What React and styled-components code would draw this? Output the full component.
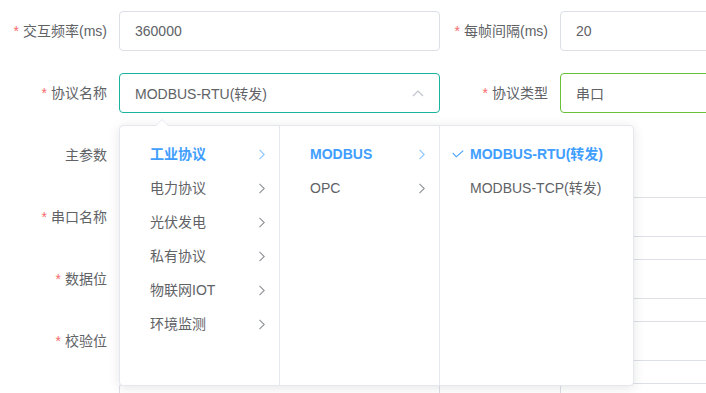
import React from "react";
import styled, { createGlobalStyle } from "styled-components";

const Global = createGlobalStyle`
  html, body { margin: 0; padding: 0; background: #fff; overflow: hidden; }
  body { font-family: "Liberation Sans", "Noto Sans CJK SC", sans-serif; font-size: 14px; color: #606266; }
  * { box-sizing: border-box; }
`;

const Form = styled.div`
  display: grid;
  grid-template-columns: 440px 440px;
  row-gap: 22px;
  padding-top: 11px;
  width: 880px;
`;

const Item = styled.div`
  display: flex;
  align-items: center;
  height: 40px;
`;

const Label = styled.label`
  flex: 0 0 ${(p) => p.$w || 120}px;
  padding-right: 12px;
  text-align: right;
  line-height: 40px;
  font-size: 14px;
  color: #606266;
  white-space: nowrap;
`;

const Star = styled.span`
  color: #f56c6c;
  margin-right: 4px;
`;

const Field = styled.div`
  position: relative;
  flex: 1;
  height: 40px;
  border: 1px solid ${(p) => p.$border || "#dcdfe6"};
  border-radius: 4px;
  background: #fff;
  padding: 0 15px;
  display: flex;
  align-items: center;
  justify-content: space-between;
  font-size: 14px;
  color: #606266;
`;

const Popper = styled.div`
  position: absolute;
  top: 51px;
  left: -1px;
  z-index: 10;
  display: flex;
  height: 261px;
  background: #fff;
  border: 1px solid #e4e7ed;
  border-radius: 4px;
  box-shadow: 0 2px 12px 0 rgba(0, 0, 0, 0.1);
`;

const Arrow = styled.div`
  position: absolute;
  top: -7px;
  left: 35px;
  width: 0;
  height: 0;
  border-left: 7px solid transparent;
  border-right: 7px solid transparent;
  border-bottom: 7px solid #e4e7ed;
  &::after {
    content: "";
    position: absolute;
    top: 1px;
    left: -6px;
    border-left: 6px solid transparent;
    border-right: 6px solid transparent;
    border-bottom: 6px solid #fff;
  }
`;

const Menu = styled.ul`
  list-style: none;
  margin: 0;
  padding: 11px 0;
  width: ${(p) => p.$w}px;
  border-right: ${(p) => (p.$last ? "none" : "1px solid #e4e7ed")};
`;

const Node = styled.li`
  position: relative;
  height: 34px;
  line-height: 34px;
  padding: 0 30px;
  display: flex;
  align-items: center;
  justify-content: space-between;
  font-size: 14px;
  white-space: nowrap;
  color: ${(p) => (p.$active ? "#409eff" : "#606266")};
  font-weight: ${(p) => (p.$active ? 700 : 400)};
`;

const Check = styled.svg`
  position: absolute;
  left: 12px;
  top: 13px;
`;

const Chevron = styled.svg`
  position: absolute;
  right: 13px;
  top: 12px;
`;

const ChevronRight = ({ active }) => (
  <Chevron width="8" height="11" viewBox="0 0 8 11">
    <polyline points="1.5,0.8 6.2,5.5 1.5,10.2" fill="none" stroke={active ? "#8cc5ff" : "#909399"} strokeWidth="1.1" />
  </Chevron>
);

const menus = [
  { w: 160, items: [["工业协议", true], ["电力协议"], ["光伏发电"], ["私有协议"], ["物联网IOT"], ["环境监测"]], arrow: true },
  { w: 160, items: [["MODBUS", true], ["OPC"]], arrow: true },
  { w: 193, items: [["MODBUS-RTU(转发)", true], ["MODBUS-TCP(转发)"]], arrow: false, last: true },
];

const Cascader = () => (
  <Popper>
    <Arrow />
    {menus.map((m, i) => (
      <Menu key={i} $w={m.w} $last={m.last}>
        {m.items.map(([t, a]) => (
          <Node key={t} $active={a}>
            {m.last && a && (
              <Check width="12" height="8" viewBox="0 0 12 8">
                <polyline points="0.8,3.2 4.3,6.8 11.2,0.6" fill="none" stroke="#409eff" strokeWidth="1.1" />
              </Check>
            )}
            <span>{t}</span>
            {m.arrow && <ChevronRight active={a} />}
          </Node>
        ))}
      </Menu>
    ))}
  </Popper>
);

const UpArrow = () => (
  <svg width="12" height="7" viewBox="0 0 12 7">
    <polyline points="1,6 6,1 11,6" fill="none" stroke="#c0c4cc" strokeWidth="1.2" />
  </svg>
);

const FormItem = ({ label, required, left, children }) => (
  <Item>
    <Label $w={left ? 119 : 120}>
      {required && <Star>*</Star>}
      {label}
    </Label>
    {children}
  </Item>
);

export default function App() {
  return (
    <>
      <Global />
      <Form>
        <FormItem left label="交互频率(ms)" required>
          <Field>360000</Field>
        </FormItem>
        <FormItem label="每帧间隔(ms)" required>
          <Field>20</Field>
        </FormItem>

        <FormItem left label="协议名称" required>
          <Field $border="#1ab3a0">
            <span>MODBUS-RTU(转发)</span>
            <UpArrow />
            <Cascader />
          </Field>
        </FormItem>
        <FormItem label="协议类型" required>
          <Field $border="#67c23a">串口</Field>
        </FormItem>

        <FormItem left label="主参数">
          <Field />
        </FormItem>
        <div />

        <FormItem left label="串口名称" required>
          <Field />
        </FormItem>
        <FormItem label="波特率" required>
          <Field />
        </FormItem>

        <FormItem left label="数据位" required>
          <Field />
        </FormItem>
        <FormItem label="停止位" required>
          <Field />
        </FormItem>

        <FormItem left label="校验位" required>
          <Field />
        </FormItem>
        <FormItem label="流控" required>
          <Field />
        </FormItem>

        <FormItem left>
          <Field />
        </FormItem>
        <FormItem>
          <Field />
        </FormItem>
      </Form>
    </>
  );
}
